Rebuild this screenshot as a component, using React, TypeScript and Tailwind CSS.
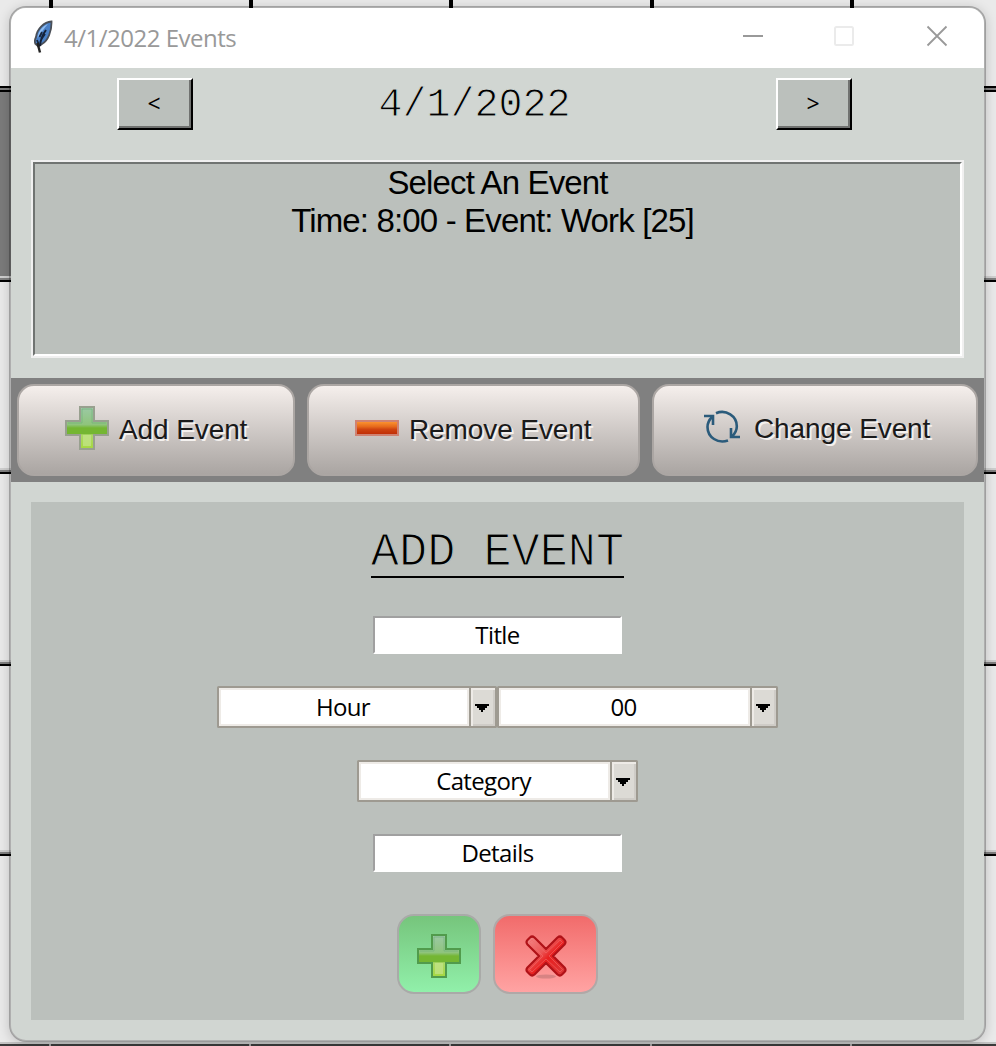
import React from "react";

const sans = "font-['Liberation_Sans',sans-serif]";
const ui = "font-['Open_Sans',sans-serif]";
const mono = "font-['Liberation_Mono',monospace]";

function RowLine() {
  return (
    <div className="h-[6px] shrink-0">
      <div className="h-[2px] bg-[#cfcfcf]" />
      <div className="h-[2px] bg-[#808080]" />
      <div className="h-[2px] bg-black" />
    </div>
  );
}

function Calendar() {
  return (
    <div className="absolute inset-0 flex flex-col bg-[#eaeaea]">
      <div className="flex h-[86px] shrink-0">
        <div className="w-[49px]" />
        <div className="w-[200px] border-l-4 border-black" />
        <div className="w-[200px] border-l-4 border-black" />
        <div className="w-[201px] border-l-4 border-black" />
        <div className="w-[200px] border-l-4 border-black" />
        <div className="flex-1 border-l-4 border-black" />
      </div>
      <div className="h-[6px] shrink-0 border-y-2 border-black bg-[#808080]" />
      <div className="flex h-[184px] shrink-0">
        <div className="w-[49px] bg-[#7b7b7b]" />
      </div>
      <RowLine />
      <div className="h-[186px] shrink-0" />
      <RowLine />
      <div className="h-[186px] shrink-0" />
      <RowLine />
      <div className="h-[184px] shrink-0" />
      <RowLine />
      <div className="h-[186px] shrink-0" />
      <div className="h-[2px] shrink-0 bg-[#c4c4c4]" />
      <div className="flex h-[2px] shrink-0 bg-[#3b3b3b]">
        <div className="w-[49px]" />
        <div className="w-[200px] border-l-2 border-[#a0a0a0]" />
        <div className="w-[200px] border-l-2 border-[#a0a0a0]" />
        <div className="w-[201px] border-l-2 border-[#a0a0a0]" />
        <div className="w-[200px] border-l-2 border-[#a0a0a0]" />
        <div className="flex-1 border-l-2 border-[#a0a0a0]" />
      </div>
    </div>
  );
}

function Feather() {
  return (
    <svg width="20" height="34" viewBox="0 0 20 34">
      <path d="M18.500 1.500C11 2 4 9 3 17C1.500 20 1.500 22 2.500 24L5.500 26.500L9 24C15 21 18.800 11 18.500 1.500Z" fill="#4a80c6" stroke="#4a4f57" strokeWidth="1.800" />
      <path d="M15 4C9 6 5 12 4.500 18C8 13 11 8 15 4Z" fill="#8fbcf0" />
      <path d="M13 10C10 14 7.500 19 7 26" fill="none" stroke="#142036" strokeWidth="2" />
      <path d="M9 12l-2.500 5M12 14l-3.500 5M4 20l2 5" stroke="#15243c" strokeWidth="1.800" />
      <path d="M4.500 23L7 32.500" fill="none" stroke="#222" strokeWidth="2.400" />
    </svg>
  );
}

function TitleBar() {
  return (
    <div className="flex h-[60px] shrink-0 items-center bg-white pl-[21px]">
      <div className="h-[36px] w-[32px] pl-px"><Feather /></div>
      <span className={`${ui} w-[660px] text-[24px] leading-[60px] tracking-[-0.5px] whitespace-nowrap text-[#999]`}>4/1/2022 Events</span>
      <svg className="-mt-[4px] ml-[18px]" width="206" height="22" viewBox="0 0 206 22" fill="none">
        <path d="M1 11h20" stroke="#999" strokeWidth="2" />
        <rect x="93" y="2" width="18" height="18" rx="1.500" stroke="#ebebeb" strokeWidth="2" />
        <path d="M185.500 1.500l19 19M204.500 1.500l-19 19" stroke="#999" strokeWidth="1.800" />
      </svg>
    </div>
  );
}

function NavButton({ label }: { label: string }) {
  return (
    <button className="h-[52px] w-[76px] border-2 border-t-white border-r-black border-b-black border-l-white bg-[#bbc0bc]">
      <span className={`${ui} flex h-full items-center justify-center border-r-2 border-b-2 border-[#707270] text-[23px] text-black`}>{label}</span>
    </button>
  );
}

function Plus({ id, edge }: { id: string; edge: string }) {
  return (
    <svg width="44" height="44" viewBox="0 0 44 44">
      <defs>
        <linearGradient id={id + "v"} x1="0" y1="0" x2="0" y2="1">
          <stop offset="0" stopColor="#9cc9a6" />
          <stop offset=".42" stopColor="#8fc47c" />
          <stop offset=".5" stopColor="#74b632" />
          <stop offset=".64" stopColor="#74b632" />
          <stop offset=".66" stopColor="#acd968" />
          <stop offset="1" stopColor="#a6d840" />
        </linearGradient>
      </defs>
      <path d="M15 1H29V15H43V29H29V43H15V29H1V15H15Z" fill={`url(#${id}v)`} stroke={edge} strokeWidth="2" />
      <path d="M17 3H27V17H41M3 17H17V3" fill="none" stroke="#6fae7c" strokeWidth="1" opacity=".6" />
      <rect x="18" y="29" width="8" height="11" fill="#c5e48b" opacity=".7" />
    </svg>
  );
}

function Minus() {
  return (
    <svg width="44" height="16" viewBox="0 0 44 16">
      <defs>
        <linearGradient id="mn" x1="0" y1="0" x2="0" y2="1">
          <stop offset="0" stopColor="#ff9a33" />
          <stop offset=".4" stopColor="#e66a1c" />
          <stop offset=".6" stopColor="#cf4310" />
          <stop offset="1" stopColor="#bd2a05" />
        </linearGradient>
      </defs>
      <rect x="1" y="1" width="42" height="14" fill="url(#mn)" stroke="#cf8272" strokeWidth="2" />
    </svg>
  );
}

function Cycle() {
  return (
    <svg width="36" height="34" viewBox="0 0 36 34" fill="none" stroke="#2b5b7b" strokeWidth="2.600">
      <path d="M12 3.200C22 -1 33 6 32.800 16.500C32.800 20 31 23.500 28 26.500" />
      <path d="M24 30.500C14 34 3.500 27.500 3.500 17C3.500 13 5 10 8 7" />
      <path d="M0 6H9V15" />
      <path d="M36 27H27V18" />
    </svg>
  );
}

function Cross() {
  return (
    <svg width="42" height="44" viewBox="0 0 42 44">
      <defs>
        <linearGradient id="cr" x1="0" y1="0" x2="1" y2="1">
          <stop offset="0" stopColor="#f28a8a" />
          <stop offset=".4" stopColor="#ec5555" />
          <stop offset=".55" stopColor="#e82020" />
          <stop offset="1" stopColor="#d93a3a" />
        </linearGradient>
      </defs>
      <ellipse cx="21" cy="41.500" rx="10" ry="2" fill="#c77a7a" opacity=".7" />
      <path d="M5 2.500Q7 .5 9.500 2.500L21 14L32.500 2.500Q35 .5 37 2.500L39.500 5Q41.500 7 39.500 9.500L28 21L39.500 32.500Q41.500 35 39.500 37L37 39.500Q35 41.500 32.500 39.500L21 28L9.500 39.500Q7 41.500 5 39.500L2.500 37Q.5 35 2.500 32.500L14 21L2.500 9.500Q.5 7 2.500 5Z" fill="url(#cr)" stroke="#b01218" strokeWidth="2.200" strokeLinejoin="round" />
      <path d="M7 5L21 18L35 5L37.500 7.500L24 21L37.500 34.500L35 37L21 24L7 37L4.500 34.500L18 21L4.500 7.500Z" fill="none" stroke="#f26a6a" strokeWidth="1" opacity=".6" />
    </svg>
  );
}

const toolClass =
  "flex h-[92px] items-center rounded-[17px] border-2 border-[#aba6a3] bg-linear-to-b from-[#f5efec] to-[#aaa5a2] text-[28px] tracking-[-0.1px] whitespace-nowrap text-[#1a1a1a] [text-shadow:2px_2px_0_#f4f1ef]";

function Combo({ label, width }: { label: string; width: string }) {
  return (
    <div className={`flex h-[42px] rounded-[1.5px] border-2 border-[#9e9a91] ${width}`}>
      <div className={`${ui} flex-1 border-2 border-[#eeebe7] bg-white pr-[2px] text-center text-[24px] leading-[34px] tracking-[-0.65px] text-black`}>{label}</div>
      <div className="flex w-[26px] items-center justify-center border-l-2 border-[#9e9a91] bg-[#dcdad5] pt-[2px] pr-[2px] shadow-[inset_2px_2px_0_#eeebe7,inset_-2px_-2px_0_#cfccc7]">
        <svg width="14" height="8" viewBox="0 0 14 8" shapeRendering="crispEdges"><path d="M0 0H14V2H12V4H10V6H8V8H6V6H4V4H2V2H0Z" /></svg>
      </div>
    </div>
  );
}

function Entry({ label }: { label: string }) {
  return (
    <div className={`${ui} h-[38px] w-[249px] border-2 border-t-[#a0a0a0] border-r-white border-b-white border-l-[#a0a0a0] bg-white text-center text-[24px] leading-[33px] tracking-[-0.6px] text-black`}>
      {label}
    </div>
  );
}

export default function App() {
  return (
    <div className="relative h-[1046px] w-[996px] overflow-hidden pt-[6px] pl-[9px]">
      <Calendar />
      <div className="relative flex h-[1036px] w-[977px] flex-col overflow-hidden rounded-[17px] border-2 border-black/25 bg-[#d1d6d2] bg-clip-padding shadow-[0_2px_12px_rgba(0,0,0,0.18)]">
        <TitleBar />
        <div className="flex h-[92px] shrink-0 items-start pt-[10px] pl-[106px]">
          <NavButton label="<" />
          <div className={`${mono} w-[583px] pr-[20px] text-center text-[40px] leading-[56px] text-black [-webkit-text-stroke:1px_#d1d6d2]`}>4/1/2022</div>
          <NavButton label=">" />
        </div>
        <div className="mx-5 h-[198px] shrink-0 border-2 border-[#f0f0f0]">
          <div className={`${sans} h-full border-2 border-t-[#707472] border-r-white border-b-white border-l-[#707472] bg-[#bbc0bc] text-[33px] leading-[38px] tracking-[-0.85px] text-black`}>
            <div className="text-center">Select An Event</div>
            <div className="pr-[10px] text-center">Time: 8:00 - Event: Work [25]</div>
          </div>
        </div>
        <div className={`${sans} mt-[20px] flex h-[104px] shrink-0 items-center gap-[12px] bg-[#808080] px-[6px]`}>
          <button className={`${toolClass} w-[278px] gap-[10px] pl-[46px]`}>
            <span className="-mt-[4px]"><Plus id="a" edge="#98a08f" /></span>Add Event
          </button>
          <button className={`${toolClass} w-[333px] gap-[10px] pl-[46px]`}>
            <span className="-mt-[4px]"><Minus /></span>Remove Event
          </button>
          <button className={`${toolClass} w-[326px] gap-[14px] pb-[2px] pl-[50px]`}>
            <span className="-mt-[4px]"><Cycle /></span>Change Event
          </button>
        </div>
        <div className="mx-5 mt-[20px] flex h-[518px] shrink-0 flex-col items-center bg-[#bbc0bc]">
          <h1 className={`${mono} mt-[24px] h-[52px] border-b-2 border-black text-[46.9px] leading-[54px] whitespace-pre text-black [-webkit-text-stroke:1.2px_#bbc0bc]`}>ADD EVENT</h1>
          <div className="mt-[38px]"><Entry label="Title" /></div>
          <div className="mt-[32px] flex">
            <Combo label="Hour" width="w-[280px]" />
            <Combo label="00" width="w-[281px]" />
          </div>
          <div className="mt-[32px]"><Combo label="Category" width="w-[281px]" /></div>
          <div className="mt-[32px]"><Entry label="Details" /></div>
          <div className="mt-[42px] flex gap-[12px]">
            <button className="flex h-[80px] w-[84px] items-center justify-center rounded-[17px] border-2 border-[#a9aaa8] bg-linear-to-b from-[#76c57c] to-[#91f0aa] pt-[4px]">
              <Plus id="b" edge="#519b4c" />
            </button>
            <button className="flex h-[80px] w-[105px] items-center justify-center rounded-[17px] border-2 border-[#b0a8a7] bg-linear-to-b from-[#f16b6b] to-[#ffa3a3] pt-[6px]">
              <Cross />
            </button>
          </div>
        </div>
      </div>
    </div>
  );
}
